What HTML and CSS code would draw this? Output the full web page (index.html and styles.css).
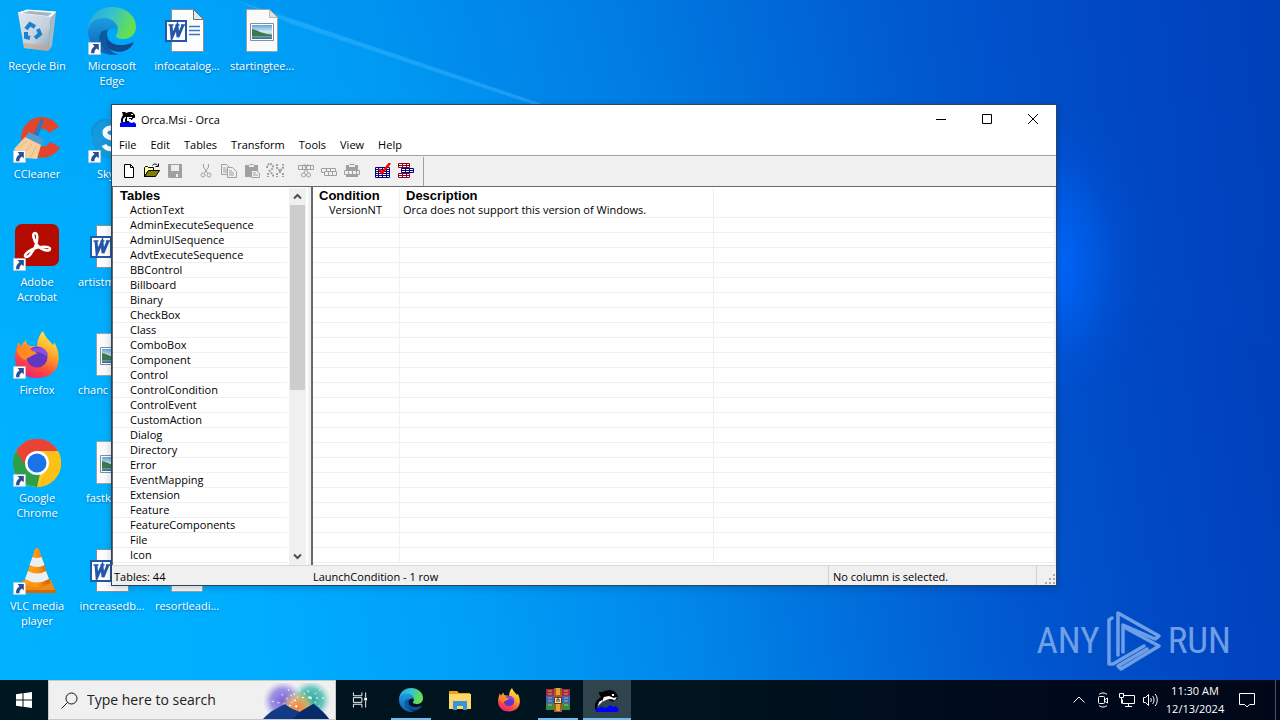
FILE: index.html
```html
<!DOCTYPE html>
<html lang="en">
<head>
<meta charset="utf-8">
<meta name="viewport" content="width=device-width, initial-scale=1">
<title>Orca.Msi - Orca</title>
<link rel="stylesheet" href="styles.css">
</head>
<body>
<svg class="defs" aria-hidden="true">
  <defs>
    <linearGradient id="edgeA" x1="0" y1="0" x2="1" y2="0.3"><stop offset="0" stop-color="#2aa5dc"/><stop offset=".5" stop-color="#35c1d0"/><stop offset="1" stop-color="#66e04e"/></linearGradient>
    <linearGradient id="edgeB" x1="0" y1="0" x2="0" y2="1"><stop offset="0" stop-color="#1b9de2"/><stop offset="1" stop-color="#0f5cb0"/></linearGradient>
    <linearGradient id="ffA" x1=".8" y1="0" x2=".3" y2="1"><stop offset="0" stop-color="#fff04a"/><stop offset=".4" stop-color="#ffa62b"/><stop offset=".72" stop-color="#ff4a3d"/><stop offset="1" stop-color="#e5207c"/></linearGradient>
    <linearGradient id="binA" x1="0" y1="0" x2="1" y2="1"><stop offset="0" stop-color="#dfe7ee"/><stop offset=".6" stop-color="#c3d0dc"/><stop offset="1" stop-color="#8e9dad"/></linearGradient>
    <linearGradient id="vlcA" x1="0" y1="0" x2="1" y2="0"><stop offset="0" stop-color="#ffa11c"/><stop offset=".5" stop-color="#ff9416"/><stop offset="1" stop-color="#d35f00"/></linearGradient>
    <linearGradient id="picA" x1="0" y1="0" x2="0" y2="1"><stop offset="0" stop-color="#5fa4dd"/><stop offset=".5" stop-color="#d9ecf5"/><stop offset="1" stop-color="#2d6a8c"/></linearGradient>
    <radialGradient id="glowP"><stop offset="0" stop-color="#7a63d8"/><stop offset=".6" stop-color="#8a7be0" stop-opacity=".8"/><stop offset="1" stop-color="#b0a8ee" stop-opacity="0"/></radialGradient>
    <radialGradient id="glowT"><stop offset="0" stop-color="#24a99c"/><stop offset=".6" stop-color="#45b9ae" stop-opacity=".8"/><stop offset="1" stop-color="#9ad8d2" stop-opacity="0"/></radialGradient>
    <radialGradient id="glowO"><stop offset="0" stop-color="#ff7a2d"/><stop offset=".6" stop-color="#f3b15a" stop-opacity=".7"/><stop offset="1" stop-color="#f3c65a" stop-opacity="0"/></radialGradient>

    <symbol id="arrow" viewBox="0 0 13 13"><path fill="#fff" stroke="#9ab" stroke-width=".5" d="M.3.3h12.4v12.4H.3z"/><path fill="#274e94" d="M4.5 2h6.3v6.3L8.700 6.400C6.500 8 6.300 9.500 6.500 11.300H3.200C2.700 8.300 3.800 6.100 6.500 4.200z"/></symbol>

    <symbol id="edge" viewBox="0 0 48 48">
      <path fill="url(#edgeA)" d="M0 22C1 9 11 0 24 0c14 0 24 9 24 20 0 8-6 12-13 12-5 0-8-2-7-4 3-3 2-9-2-12-6-5-20-4-26 6z"/>
      <path fill="url(#edgeB)" d="M0 24c1-10 9-13 16-13 7 0 13 4 14 11-4-3-13 0-13 9 0 9 7 15 14 17C14 50 0 39 0 24z"/>
      <path fill="#124a91" d="M18 25c-5 5-2 15 5 18 9 4 18 1 22-6 1-2 0-2-2-1-9 4-20 2-23-4-1-3-1-5-2-7z"/>
      <path fill="#0c59a4" d="M12 27c-3 10 4 19 18 20.500C21 46 15 37 20 23c-4 0-7 1-8 4z"/>
    </symbol>

    <symbol id="firefox" viewBox="0 0 48 48">
      <path fill="url(#ffA)" d="M5 11c1 1 2 3 3 4 1-2 3-4 5-6 0 3 1 5 4 6 3 0 5 0 7 1 0-6 2-12 6-16 2 6 6 9 10 14 1-1 1-2 1-3 9 14 6 36-17 36C9 47 2 37 2 26 2 20 4 17 5 11z"/>
      <circle cx="24" cy="26" r="10.500" fill="#6336c4"/>
      <path fill="#8c4fdd" d="M14 21c5-5 15-7 20 0 2 4 0 5-4 2-5-4-10 0-16-2z"/>
      <path fill="#ff8a24" d="M4 17c6-2 12-2 15 3 2 0 4 1 5 3-3 0-5 2-7 3-2 1-4 1-4 3-6-1-9-7-9-12z"/>
    </symbol>

    <symbol id="worddoc" viewBox="0 0 48 48">
      <path fill="#fcfdfe" stroke="#8b9097" d="M8.500 2.500h22l10 10v32h-32z"/><path fill="#e4e6e8" stroke="#6d7277" d="M30.500 2.500v10h10z"/>
      <path fill="none" stroke="#3f74b8" stroke-width="1.300" d="M26 19.500h11M26 23.500h11M26 27.500h11"/>
      <path fill="#fff" stroke="#2357a8" stroke-width="2" d="M3 14h20v20H3z"/>
      <path fill="none" stroke="#2357a8" stroke-width="3" d="M8 18l1 12 5-11 1 11 5-12"/>
      <path stroke="#2357a8" stroke-width="1.500" d="M5.500 18h5M12.500 18h4M18 18h4"/>
    </symbol>

    <symbol id="picdoc" viewBox="0 0 48 48">
      <path fill="#fafafa" stroke="#9a9a9a" stroke-width=".8" d="M8.500 2.500h23l8 8v34h-31z"/><path fill="#dfe1e3" stroke="#aaa" stroke-width=".8" d="M31.500 2.500v8h8z"/>
      <path fill="#fff" stroke="#7f8fa0" d="M12.500 16.500h23v17h-23z"/><path fill="url(#picA)" d="M14 18h20v14H14z"/><path fill="#3e7a49" d="M14 22c5 1 9 4 15 5l5 1v1H14z"/>
    </symbol>

    <symbol id="orca" viewBox="0 0 16 16">
      <path fill="#000" d="M2 1h3l1 1 3-1 3 0 2 2 1 1v3h-2l-1 2H9v3H3l-2-1V8l1-2 1-2z"/>
      <path fill="#fff" d="M3 8l2-2h1v1L5 8v3H3zM7 6h5v1H9v1H7zM11 3h2v1h-2zM7 8h4v2H7z"/>
      <path fill="#00f" d="M0 12l2-1h2l2 1 3-1 3 1 2-1 2 2v3H0z"/>
    </symbol>

    <symbol id="orcabig" viewBox="0 0 24 24">
      <path fill="#000" d="M4 4h4l1-1 6-1 4 1 3 3 1 4-2 2h-3l1 2-3-1-2-1H9l-4 2-3 3v4H0v-5l2-4 4-3-2-3z"/>
      <path fill="#fff" d="M9 9l5-1 5 2 3-1-2 3-5-1-4 1-4 2 1-3zM17 6h2v2h-2zM4 14l3-2v2l-4 4z"/>
      <path fill="#00f" d="M0 21l4-1 3-2 2 2 4-1 2-2 3 2 3-1 3 4-2 2H1z"/>
    </symbol>
  </defs>
</svg>

<div class="desktop">
  <svg class="beams" viewBox="0 0 1280 680" preserveAspectRatio="none" aria-hidden="true">
    <path d="M235 0L300 20 560 104 550 104 290 22z" fill="#4cc0ff" opacity=".35"/>
    <path d="M235 0L560 104 1280 330V0z" fill="#0058c8" opacity=".08"/>
  </svg>

  <main class="workspace">
    <div class="icons">
      <button class="shortcut"><svg viewBox="0 0 48 48">
        <path fill="#f5f8fa" stroke="#fff" d="M5 6l9-3 29 2-5 5z"/><path fill="#a5b3bd" d="M9 6l8-2 22 2-4 3z"/><path fill="url(#binA)" d="M5 6l33 4-3 34-24-3z"/><path fill="#a9b8c4" d="M38 10l5-5-4 34-4 5z"/><path fill="#c7a58f" opacity=".6" d="M11 36l24 3 5-4-5 9-24-3z"/>
        <path fill="none" stroke="#1a80cf" stroke-width="4" d="M13 22l4-5 5 3M25 22l2 5-5 4M17 31l-4-1 0-5"/></svg><span>Recycle Bin</span></button>
      <button class="shortcut"><svg viewBox="0 0 48 48"><path fill="#e2452c" d="M46 12C40 2 28-1 18 5c-12 8-13 24-3 33 10 8 26 6 32-6l-10-5c-3 5-9 6-13 2-5-5-3-13 3-15 4-1 7 0 9 4z"/><path d="M28 4l3 1-7 20-5-3z" fill="#2b77b8"/><path d="M16 17l15 7-2 7-17-9z" fill="#4f9cd4"/><path d="M12 22l16 8-4 14-11-1-12-9z" fill="#f4cf9d"/><path d="M5 33l9-7M11 38l8-9M18 42l5-11" stroke="#e3b67c"/><use href="#arrow" x="0" y="35" width="13" height="13"/></svg><span>CCleaner</span></button>
      <button class="shortcut"><svg viewBox="0 0 48 48"><rect x="2" y="1" width="44" height="42" rx="7" fill="#b30b00"/><path fill="none" stroke="#fff" stroke-width="2.600" d="M12 33c3 3 7-3 10-9 3-6 3-14 0-14s-2 7 3 13c3 4 12 6 12 3s-10-3-17 0c-4 2-8 4-8 7z"/><use href="#arrow" x="0" y="35" width="13" height="13"/></svg><span>Adobe Acrobat</span></button>
      <button class="shortcut"><svg viewBox="0 0 48 48"><use href="#firefox" width="48" height="48"/><use href="#arrow" x="0" y="35" width="13" height="13"/></svg><span>Firefox</span></button>
      <button class="shortcut"><svg viewBox="0 0 48 48"><circle cx="24" cy="24" r="24" fill="#fc3"/><path fill="#ea4335" d="M3 12a24 24 0 0 1 42 0H24L13 30z"/><path fill="#2f9e4b" d="M3 12l12 18c3 5 8 6 12 5l-3 13A24 24 0 0 1 3 12z"/><path fill="#fbc116" d="M45 12a24 24 0 0 1-21 36l10-18c2-5 1-10-3-18z"/><circle cx="24" cy="24" r="12" fill="#fff"/><circle cx="24" cy="24" r="9.500" fill="#1a73e8"/><use href="#arrow" x="0" y="35" width="13" height="13"/></svg><span>Google Chrome</span></button>
      <button class="shortcut"><svg viewBox="0 0 48 48"><path fill="#f08a12" d="M10 33h28l5 13H5z"/><path fill="#d66a00" d="M5 43h38v3H5z"/><path fill="url(#vlcA)" d="M22 2q2-2 4 0l11 34q-13 8-26 0z"/><path fill="#eceff1" d="M19.500 10q4.500 2 9 0l3 8q-7 4-15 0zM15 24q9 5 18 0l3 8q-12 7-24 0z"/><use href="#arrow" x="0" y="35" width="13" height="13"/></svg><span>VLC media player</span></button>

      <button class="shortcut"><svg viewBox="0 0 48 48"><use href="#edge" width="48" height="48"/><use href="#arrow" x="0" y="35" width="13" height="13"/></svg><span>Microsoft Edge</span></button>
      <button class="shortcut"><svg viewBox="0 0 48 48"><circle cx="17" cy="18" r="14" fill="#1191d6"/><circle cx="31" cy="31" r="14" fill="#0a6fc0"/><circle cx="24" cy="24" r="20" fill="#1499de"/><path fill="none" stroke="#fff" stroke-width="5" d="M32 17c-3-6-16-5-15 1 1 7 15 4 15 11 0 6-13 7-16 1"/><use href="#arrow" x="0" y="35" width="13" height="13"/></svg><span>Skype</span></button>
      <button class="shortcut covered"><svg><use href="#worddoc"/></svg><span>artistm</span></button>
      <button class="shortcut covered"><svg><use href="#picdoc"/></svg><span>chanc</span></button>
      <button class="shortcut covered short"><svg><use href="#picdoc"/></svg><span>fastk</span></button>
      <button class="shortcut"><svg><use href="#worddoc"/></svg><span>increasedb...</span></button>

      <button class="shortcut"><svg><use href="#worddoc"/></svg><span>infocatalog...</span></button>
      <button class="shortcut last-row"><svg><use href="#picdoc"/></svg><span>resortleadi...</span></button>
      <button class="shortcut next-column"><svg><use href="#picdoc"/></svg><span>startingtee...</span></button>
    </div>

    <div class="brand"><span>ANY</span>
      <svg viewBox="0 0 56 62"><g fill="none" stroke="currentColor" stroke-width="3.500" stroke-linejoin="round" stroke-linecap="round"><path d="M6 8L3 10V54h4L38 36"/><path d="M12 45V3L53 26 49 29 17 15V42"/><path d="M18 17L53 36 15 59l-3-3L41 39"/></g></svg>
      <span>RUN</span></div>

    <section class="window" aria-label="Orca.Msi - Orca">
      <header class="titlebar">
        <svg class="app"><use href="#orca"/></svg><h1>Orca.Msi - Orca</h1>
        <div class="caption">
          <button aria-label="Minimize"><svg viewBox="0 0 12 12"><path d="M1 6.500h10"/></svg></button>
          <button aria-label="Maximize"><svg viewBox="0 0 12 12"><path d="M1.500 1.500h9v9h-9z"/></svg></button>
          <button aria-label="Close"><svg viewBox="0 0 12 12"><path d="M1 1l10 10M11 1L1 11"/></svg></button>
        </div>
      </header>
      <nav class="menubar"><button>File</button><button>Edit</button><button>Tables</button><button>Transform</button><button>Tools</button><button>View</button><button>Help</button></nav>
      <div class="toolbar">
        <div class="tools">
          <div class="group">
            <button aria-label="New"><svg viewBox="0 0 16 16"><path fill="#fff" stroke="#000" d="M3.500 1.500h6l3 3v10h-9z"/><path fill="none" stroke="#000" d="M9.500 1.500v3h3"/></svg></button>
            <button aria-label="Open"><svg viewBox="0 0 16 16"><path fill="#ffff9c" stroke="#000" d="M.5 13.500v-9l1-1h2l1 1h5v3h-5z"/><path fill="#808000" stroke="#000" d="M.5 13.500l4-6h11l-4 6z"/><path fill="none" stroke="#000" d="M8.500 2.500c1-2 4-2 5 0M14.500.5v3h-3"/></svg></button>
            <button aria-label="Save" disabled><svg viewBox="0 0 16 16"><path fill="#a0a0a0" d="M1 1h14v14H2l-1-1z"/><path fill="#eee" d="M4 2h8v6H4zM9 11h2v3H9z"/></svg></button>
          </div>
          <div class="group">
            <button aria-label="Cut" disabled><svg viewBox="0 0 16 16"><path class="gray" d="M5.500 1v3l4 6M10.500 1v3l-4 6"/><circle class="gray" cx="5" cy="12" r="2"/><circle class="gray" cx="11" cy="12" r="2"/></svg></button>
            <button aria-label="Copy" disabled><svg viewBox="0 0 16 16"><path class="gray" d="M.5 1.500h5l3 3v7h-8zM2 5h3M2 7h4M2 9h4"/><path fill="#f0f0f0" stroke="#a0a0a0" d="M6.500 4.500h5l4 4v6h-9zM8 8h3M8 10h5M8 12h5"/></svg></button>
            <button aria-label="Paste" disabled><svg viewBox="0 0 16 16"><path fill="#a0a0a0" d="M1 2h4l1-1h3l1 1h4v12H1z"/><path fill="#eee" d="M5 2h5v2H5z"/><path fill="#f0f0f0" stroke="#a0a0a0" d="M7.500 7.500h5l3 3v4h-8zM9 10h3M9 12h5"/></svg></button>
            <button aria-label="Find" disabled><svg class="wide" viewBox="0 0 18 16"><path class="gray heavy" d="M1 5V3l2-2h2l2 2v2L5 7M3 7l4 5v2M2 10v4M11 1v4l3 3 3-3V1M14 8v2M11 10v4M17 10v4"/></svg></button>
          </div>
          <div class="group">
            <button aria-label="Cut row" disabled><svg viewBox="0 0 16 16"><path class="gray" d="M.5 2.500h15v4H.5zM4.500 2v4M8.500 2v4M12.500 2v4M6 1l4 9M10 1L6 10"/><circle class="gray" cx="5.500" cy="12" r="2"/><circle class="gray" cx="10.500" cy="12" r="2"/></svg></button>
            <button aria-label="Copy row" disabled><svg viewBox="0 0 16 16"><path class="gray" d="M.5 5.500h14v4H.5zM5.500 5v4M9.500 5v4"/><path fill="#f0f0f0" stroke="#a0a0a0" d="M3.500 8.500h12v4h-12zM7.500 8v4M11.500 8v4"/></svg></button>
            <button aria-label="Paste row" disabled><svg viewBox="0 0 16 16"><path fill="#a0a0a0" d="M2 2h3l1-1h4l1 1h3v12H2z"/><path fill="#eee" d="M5 2h6v2H5z"/><path fill="#f0f0f0" stroke="#a0a0a0" d="M.5 7.500h15v4H.5zM4.500 7v4M8.500 7v4M12.500 7v4"/></svg></button>
          </div>
          <div class="group">
            <button aria-label="Validate"><svg viewBox="0 0 16 16"><path fill="#fff" stroke="#000080" d="M.5 4.500h14v10H.5zM0 6.500h15M0 8.500h15M0 10.500h15M0 12.500h15M3.500 4v11M7.500 4v11M11.500 4v11"/><path fill="none" stroke="red" stroke-width="2.500" d="M4 6l3 4 8-10"/></svg></button>
            <button aria-label="Relationships"><svg viewBox="0 0 16 16"><path fill="#fff" stroke="#900020" d="M.5.500h11v4H.5zM4.500.5v4M8.500.5v4M0 2.500h12M.5 10.500h11v4H.5zM4.500 10.500v4M8.500 10.500v4M0 12.500h12"/><path fill="#fff" stroke="#000080" d="M3.500 5.500h12v4h-12zM7.500 5v5M11.500 5v5M3 7.500h12"/></svg></button>
          </div>
        </div>
      </div>

      <div class="panes">
        <div class="tables-pane">
          <table class="list">
            <thead><tr><th scope="col">Tables</th></tr></thead>
            <tbody>
              <tr><td>ActionText</td></tr><tr><td>AdminExecuteSequence</td></tr><tr><td>AdminUISequence</td></tr><tr><td>AdvtExecuteSequence</td></tr><tr><td>BBControl</td></tr><tr><td>Billboard</td></tr><tr><td>Binary</td></tr><tr><td>CheckBox</td></tr><tr><td>Class</td></tr><tr><td>ComboBox</td></tr><tr><td>Component</td></tr><tr><td>Control</td></tr><tr><td>ControlCondition</td></tr><tr><td>ControlEvent</td></tr><tr><td>CustomAction</td></tr><tr><td>Dialog</td></tr><tr><td>Directory</td></tr><tr><td>Error</td></tr><tr><td>EventMapping</td></tr><tr><td>Extension</td></tr><tr><td>Feature</td></tr><tr><td>FeatureComponents</td></tr><tr><td>File</td></tr><tr><td>Icon</td></tr>
            </tbody>
          </table>
          <div class="scrollbar">
            <button aria-label="Scroll up"><svg viewBox="0 0 9 9"><path d="M1 6.500L4.500 3 8 6.500"/></svg></button>
            <div class="track"><div class="thumb"></div></div>
            <button aria-label="Scroll down"><svg viewBox="0 0 9 9"><path d="M1 2.500L4.500 6 8 2.500"/></svg></button>
          </div>
        </div>
        <div class="rows-pane">
          <table class="list grid">
            <colgroup><col class="c-condition"><col class="c-description"><col></colgroup>
            <thead><tr><th scope="col">Condition</th><th scope="col">Description</th><td></td></tr></thead>
            <tbody>
              <tr><td>VersionNT</td><td>Orca does not support this version of Windows.</td><td></td></tr>
              <tr><td></td><td></td><td></td></tr><tr><td></td><td></td><td></td></tr><tr><td></td><td></td><td></td></tr><tr><td></td><td></td><td></td></tr><tr><td></td><td></td><td></td></tr><tr><td></td><td></td><td></td></tr><tr><td></td><td></td><td></td></tr><tr><td></td><td></td><td></td></tr><tr><td></td><td></td><td></td></tr><tr><td></td><td></td><td></td></tr><tr><td></td><td></td><td></td></tr><tr><td></td><td></td><td></td></tr><tr><td></td><td></td><td></td></tr><tr><td></td><td></td><td></td></tr><tr><td></td><td></td><td></td></tr><tr><td></td><td></td><td></td></tr><tr><td></td><td></td><td></td></tr><tr><td></td><td></td><td></td></tr><tr><td></td><td></td><td></td></tr><tr><td></td><td></td><td></td></tr><tr><td></td><td></td><td></td></tr><tr><td></td><td></td><td></td></tr><tr><td></td><td></td><td></td></tr>
            </tbody>
          </table>
        </div>
      </div>
      <footer class="status">
        <span class="s-tables">Tables: 44</span><span class="s-rows">LaunchCondition - 1 row</span><span class="s-column">No column is selected.</span>
        <span class="grip"><svg viewBox="0 0 10 10"><path fill="#aaa" d="M8 0h2v2H8zM4 4h2v2H4zM8 4h2v2H8zM0 8h2v2H0zM4 8h2v2H4zM8 8h2v2H8z"/></svg></span>
      </footer>
    </section>
  </main>

  <footer class="taskbar">
    <button class="task start" aria-label="Start"><svg class="s16" viewBox="0 0 16 16"><path fill="#fff" d="M0 2.200L6.500 1.300v6.200H0zM7.500 1.200L16 0v7.500H7.500zM0 8.500h6.500v6.200L0 13.800zM7.500 8.500H16V16l-8.500-1.200z"/></svg></button>
    <div class="search">
      <svg class="lens" viewBox="0 0 17 17"><circle cx="10.500" cy="6.500" r="5.500"/><path d="M6.500 10.500L.5 16.500"/></svg>
      <input type="text" placeholder="Type here to search" aria-label="Search">
      <svg class="art" viewBox="0 0 72 36"><circle cx="20" cy="18" r="20" fill="url(#glowP)"/><circle cx="48" cy="17" r="20" fill="url(#glowT)"/><circle cx="35" cy="25" r="17" fill="url(#glowO)"/>
        <path stroke="#fff" fill="none" stroke-dasharray="2 4" d="M34 24L16 9M34 24L24 4M34 24L8 18M47 15L34 5M47 15L44 4M47 15l11-9M47 15l14 0M47 15L34 14M47 15l10 8M34 24l-4-18"/>
        <path fill="#123a86" d="M0 36c8-9 15-11 22-15 6 5 9 5 15 8 6-2 8-5 14-8 6 5 11 9 15 15z"/><path fill="#092a6a" d="M30 36l8-8 12-7c7 5 12 10 16 15z"/></svg>
    </div>
    <button class="task view" aria-label="Task View"><svg class="s16" viewBox="0 0 17 16"><path fill="none" stroke="#fff" d="M1.500 0v3.500h9V0M1.500 5.500h9v5h-9zM1.500 16v-3.500h9V16M14.500 0v5M14.500 9v7"/><path fill="#fff" d="M13 5.500h3v3h-3z"/></svg></button>
    <button class="task running" aria-label="Microsoft Edge"><svg><use href="#edge"/></svg></button>
    <button class="task" aria-label="File Explorer"><svg viewBox="0 0 24 24"><path fill="#e8a317" d="M1 3h8l2 2h11v3H1z"/><path fill="#ffd767" d="M1 6h22v15H1z"/><path fill="#3d93d8" d="M5 13h14v9h-4v-4H9v4H5z"/></svg></button>
    <button class="task" aria-label="Firefox"><svg><use href="#firefox"/></svg></button>
    <button class="task running" aria-label="WinRAR"><svg viewBox="0 0 24 24"><path fill="#a82a3c" d="M0 1h24v7H0z"/><path fill="#3d63b6" d="M0 8h24v7H0z"/><path fill="#3a8a45" d="M0 15h24v7H0z"/><path stroke="#e0c8a0" stroke-width=".7" d="M2 3h4M2 6h4M18 3h4M18 6h4M2 10h4M18 10h4M2 13h4M18 13h4M2 17h4M18 17h4"/><path fill="#a45c20" d="M8 0h8v24H8z"/><path fill="#e3a43b" d="M10 0h4v7h-4zM10 16h4v7h-4z"/><path fill="#f3e4b0" stroke="#5a3510" d="M8.500 9.500h7v6h-7z"/><path fill="none" stroke="#333" d="M11 14v-3h2v3"/></svg></button>
    <button class="task running active" aria-label="Orca"><svg><use href="#orcabig"/></svg></button>
    <div class="tray">
      <button aria-label="Show hidden icons"><svg class="s16" viewBox="0 0 16 16"><path d="M2.500 10.500L8 5l5.500 5.500"/></svg></button>
      <button aria-label="Meet Now"><svg class="s16" viewBox="0 0 16 16"><path d="M4 2.500c2-2 6-2 8 0M4 13.500c2 2 6 2 8 0"/><rect x="3.500" y="4.500" width="6" height="7" rx="1"/><path d="M9.500 8l3-2v5l-3-2"/></svg></button>
      <button aria-label="Network"><svg class="s16" viewBox="0 0 16 16"><path d="M5 3.500h10.500v8H3.500v-4M9.500 12v2.500M6 14.500h7M.5 1.500h4v4h-4zM2.500 5.500v6"/></svg></button>
      <button aria-label="Volume"><svg class="s16" viewBox="0 0 16 16"><path d="M.5 5.500h2l3-3v11l-3-3h-2zM7.500 6c1 1 1 3 0 4M9.500 4c2 2 2 6 0 8M12 2c3 3 3 9 0 12"/></svg></button>
      <time datetime="2024-12-13T11:30">11:30 AM<br>12/13/2024</time>
      <button class="notify" aria-label="Notifications"><svg class="s16" viewBox="0 0 16 16"><path d="M.5 1.500h15v11h-5L8 15l-2.500-2.500h-5z"/></svg></button>
    </div>
  </footer>
</div>
</body>
</html>
```
FILE: styles.css
```css
* { box-sizing: border-box; }

body {
  margin: 0;
  font: 11px/15px "Open Sans", "Noto Sans", sans-serif;
  color: #000;
}

button {
  margin: 0;
  padding: 0;
  border: 0;
  background: none;
  color: inherit;
  font: inherit;
}

svg { display: block; flex: none; }
.defs { position: absolute; width: 0; height: 0; }
.s16 { width: 16px; height: 16px; }

/* Desktop */
.desktop {
  position: relative;
  display: flex;
  flex-direction: column;
  min-height: 100vh;
  overflow: hidden;
  background:
    radial-gradient(ellipse 110px 170px at 82% 36%, #0068ff, #0064f8b0 30%, #005ae850 60%, #0050d818 82%, #0050d000 100%),
    linear-gradient(180deg, #0050c818 0%, #0050c800 60%),
    linear-gradient(82deg, #00b2ff 0%, #00aeff 18%, #00a0f8 34%, #0088ea 50%, #0070dc 62%, #0058d0 74%, #0048c4 86%, #003cb6 100%);
}
.beams { position: absolute; inset: 0; width: 100%; height: 100%; }
.workspace { position: relative; flex: 1; }

.icons {
  display: grid;
  grid-template-rows: repeat(6, 108px);
  grid-auto-columns: 75px;
  grid-auto-flow: column;
  padding-top: 7px;
}
.shortcut {
  display: flex;
  flex-direction: column;
  align-items: center;
  gap: 3px;
  padding: 0 4px 0 3px;
  color: #fff;
  text-shadow: 0 1px 2px #00306080;
}
.shortcut svg { width: 48px; height: 48px; }
.covered span { width: 68px; text-align: left; }
.short span { width: 52px; }
.last-row { grid-row: 6; grid-column: 3; }
.next-column { grid-row: 1; grid-column: 4; }

.brand {
  position: absolute;
  right: 49px;
  bottom: 8px;
  display: flex;
  align-items: center;
  gap: 6px;
  color: #8ab4ee;
  opacity: .8;
  font: 37px/62px "Roboto Condensed", "Open Sans Condensed", "Liberation Sans", sans-serif;
}
.brand svg { width: 56px; height: 62px; }

/* Application window */
.window {
  position: absolute;
  top: 104px;
  left: 111px;
  right: 223px;
  border: 1px solid #2a4560;
  background: #f0f0f0;
  box-shadow: 0 2px 8px #0003;
}
.titlebar {
  display: flex;
  align-items: center;
  gap: 5px;
  height: 28px;
  padding-left: 8px;
  background: #fff;
}
.titlebar h1 { flex: 1; margin: 0; font-size: 11px; font-weight: 400; }
.app { width: 16px; height: 16px; }
.caption { display: flex; }
.caption button { display: grid; place-items: center; width: 46px; height: 28px; }
.caption svg { width: 12px; height: 12px; fill: none; stroke: #000; }

.menubar { display: flex; gap: 14px; height: 22px; padding: 0 7px; background: #fff; }
.toolbar {
  display: flex;
  height: 32px;
  border-top: 1px solid #a0a0a0;
  border-bottom: 1px solid #696969;
}
.tools { display: flex; gap: 8px; margin-top: 1px; padding: 0 6px 2px 5px; border-right: 1px solid #a0a0a0; }
.group { display: flex; align-items: center; }
.group button { display: grid; place-items: center; width: 23px; height: 22px; }
.group svg { width: 16px; height: 16px; }
.group .wide { width: 18px; }
.gray { fill: none; stroke: #a0a0a0; }
.heavy { stroke-width: 2; stroke-dasharray: 2 1; }

.panes { display: flex; gap: 3px; }
.tables-pane {
  display: flex;
  flex: none;
  width: 196px;
  border-left: 1px solid #696969;
  padding-top: 1px;
  padding-right: 2px;
  background: #fff;
}
.tables-pane .list { flex: 1; margin-right: 2px; align-self: flex-start; }
.rows-pane { flex: 1; min-width: 0; margin-right: 2px; padding: 1px 0 2px; border-left: 2px solid #696969; background: #fff; }

.list { border-spacing: 0; table-layout: fixed; }
.list th, .list td { height: 15px; padding: 0; overflow: hidden; text-align: left; white-space: nowrap; line-height: 14px; }
.list th { padding: 1px 0 0 7px; font: bold 13px/14px "Liberation Sans", sans-serif; }
.list tbody td { border-bottom: 1px solid #f0f0f0; padding-left: 17px; }
.grid { width: 100%; }
.grid th, .grid td { border-right: 1px solid #f0f0f0; }
.list.grid th { padding-left: 6px; }
.grid td:last-child { border-right: 0; }
.list.grid tbody td { padding-left: 16px; }
.list.grid tbody td + td { padding-left: 3px; }
.c-condition { width: 87px; }
.c-description { width: 314px; }

.scrollbar { display: flex; flex-direction: column; width: 17px; background: #f0f0f0; }
.scrollbar button { display: grid; place-items: center; height: 17px; }
.scrollbar svg { width: 9px; height: 9px; fill: none; stroke: #505050; stroke-width: 2; }
.track { flex: 1; padding: 0 1px; }
.thumb { height: 54%; background: #cdcdcd; }

.status { display: flex; height: 20px; padding-left: 2px; border-top: 1px solid #d7d7d7; line-height: 21px; }
.s-tables { width: 199px; }
.s-rows { flex: 1; }
.s-column { width: 209px; padding-left: 4px; border-left: 1px solid #d0d0d0; border-right: 1px solid #d0d0d0; }
.grip { display: flex; justify-content: flex-end; align-items: flex-end; width: 19px; padding: 1px; }
.grip svg { width: 10px; height: 10px; }

/* Taskbar */
.taskbar {
  position: relative;
  display: flex;
  height: 40px;
  background: linear-gradient(90deg, #001620, #00131e 55%, #000a1c 80%, #000718);
  color: #fff;
}
.task { display: grid; place-items: center; width: 48px; margin-right: 1px; border-bottom: 2px solid transparent; border-top: 2px solid transparent; }
.start { margin-right: 0; }
.view { margin-right: 3px; }
.task svg:not(.s16) { width: 24px; height: 24px; }
.running { background: linear-gradient(#76b9ed, #76b9ed) center bottom / 40px 2px no-repeat border-box; }
.active { background: linear-gradient(#76b9ed, #76b9ed) center bottom / 48px 2px no-repeat border-box, #30444e; }
.search { display: flex; align-items: center; width: 288px; padding-left: 12px; border: 1px solid #c8c8c8; background: #f0f0f0; }
.lens { width: 17px; height: 17px; fill: none; stroke: #111; }
.search input {
  flex: 1;
  min-width: 0;
  margin-left: 9px;
  padding: 0;
  border: 0;
  outline: 0;
  background: none;
  color: #222;
  font: 14px/20px "Open Sans", "Noto Sans", sans-serif;
}
.search input::placeholder { color: #222; opacity: 1; }
.art { align-self: flex-end; width: 72px; height: 36px; }

.tray { display: flex; align-items: center; margin-left: auto; margin-right: 4px; padding-right: 8px; border-right: 1px solid #4c5360; }
.tray button { display: grid; place-items: center; width: 24px; height: 40px; }
.tray svg { fill: none; stroke: #fff; }
.tray time { width: 64px; text-align: center; line-height: 18px; }
.tray .notify { width: 40px; }
```
